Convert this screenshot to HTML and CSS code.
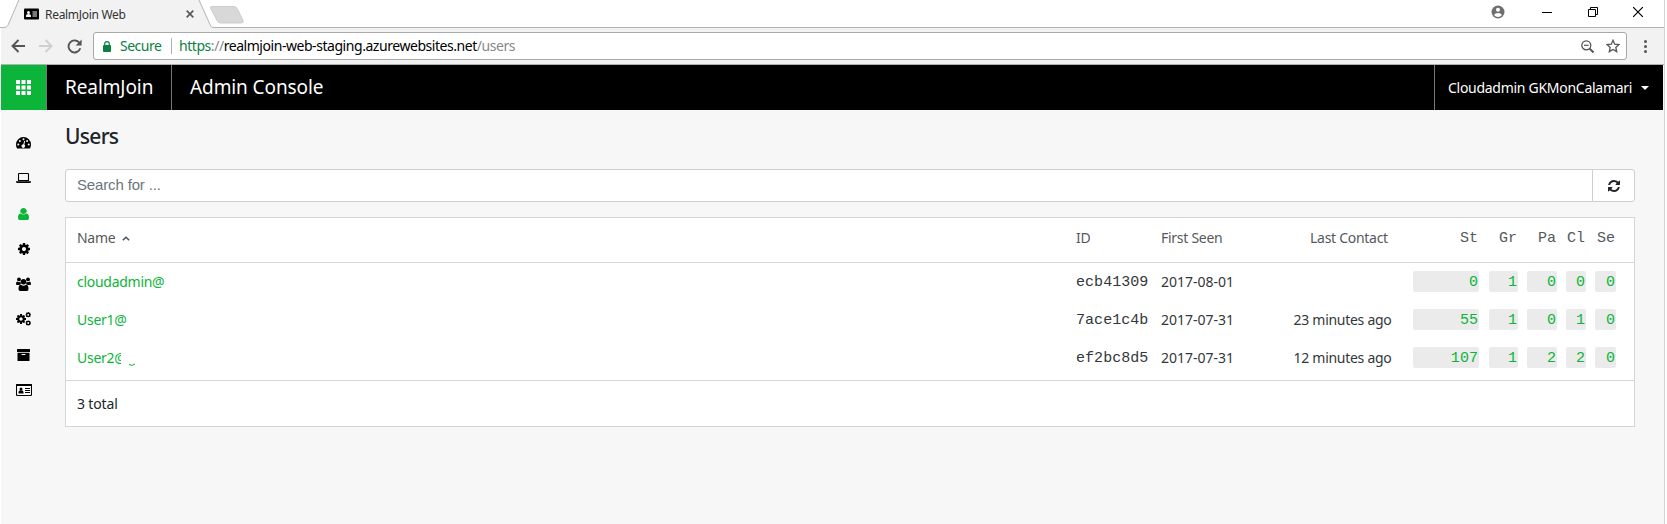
FILE: index.html
```html
<!DOCTYPE html>
<html lang="en">
<head>
<meta charset="utf-8">
<title>RealmJoin Web</title>
<link rel="stylesheet" href="styles.css">
</head>
<body>
<svg class="defs" width="0" height="0">
  <symbol id="cog" viewBox="128 128 1536 1536"><path d="M1152 896q0-106-75-181t-181-75-181 75-75 181 75 181 181 75 181-75 75-181zm512-109v222q0 12-8 23t-20 13l-185 28q-19 54-39 91 35 50 107 138 10 12 10 25t-9 23q-27 37-99 108t-94 71q-12 0-26-9l-138-108q-44 23-91 38-16 136-29 186-7 28-36 28h-222q-14 0-24.5-8.5t-11.5-21.5l-28-184q-49-16-90-37l-141 107q-10 9-25 9-14 0-25-11-126-114-165-168-7-10-7-23 0-12 8-23 15-21 51-66.5t54-70.5q-27-50-41-99l-183-27q-13-2-21-12.5t-8-23.5v-222q0-12 8-23t19-13l186-28q14-46 39-92-40-57-107-138-10-12-10-24 0-10 9-23 26-36 98.5-107.5t94.5-71.5q13 0 26 10l138 107q44-23 91-38 16-136 29-186 7-28 36-28h222q14 0 24.5 8.5t11.5 21.5l28 184q49 16 90 37l142-107q9-9 24-9 13 0 25 10 129 119 165 170 7 8 7 22 0 12-8 23-15 21-51 66.5t-54 70.5q26 50 41 98l183 28q13 2 21 12.5t8 23.5z"/></symbol>
</svg>
<div class="window">
  <header class="tabs">
    <svg class="tabshape" width="250" height="28" viewBox="0 0 250 28">
      <path d="M0 28V27.500H4C7 27.500 7.500 26 8.500 24L18.500 1L19 0H199L210 24.500C211 27 212 27.500 214 27.500H250V28Z" fill="#f2f2f2"/>
      <path d="M0 27.500H4C7 27.500 7.500 26 8.500 24L18.500 1L19-1M198.500-1L210 24.500C211 27 212 27.500 214 27.500H250" fill="none" stroke="#b4b4b4"/>
      <path d="M211.500 6.500H234Q236.500 6.500 237.500 9L243 20.500Q244 23 241.500 23H221Q218 23 217 20.500L210.500 8Q210 6.500 211.500 6.500Z" fill="#d8d8d8" stroke="#cdcdcd"/>
    </svg>
    <div class="tab">
      <svg width="15" height="12" viewBox="0 0 15 12"><rect width="15" height="11" y=".5" rx="1"/><g fill="#f2f2f2"><circle cx="4.500" cy="4.500" r="1.500"/><path d="M2 9V7.500Q2 6 4.500 6T7 7.500V9ZM8.500 3.500H13V4.500H8.500ZM8.500 5.500H13V6.500H8.500ZM8.500 7.500H13V8.500H8.500Z"/></g></svg>
      <span class="tabtitle">RealmJoin Web</span>
      <svg width="8" height="8" viewBox="0 0 8 8"><path d="M.7.7L7.300 7.300M7.300.7L.7 7.300" stroke="#5a5a5a" stroke-width="1.700"/></svg>
    </div>
    <div class="controls">
      <svg width="14" height="14" viewBox="0 0 14 14"><circle cx="7" cy="7" r="6.500" fill="#6e6e6e"/><g fill="#fff"><circle cx="7" cy="4.800" r="2"/><path d="M3 10Q4 8 7 8T11 10Q9.500 12 7 12T3 10Z"/></g></svg>
      <svg width="10" height="10" viewBox="0 0 10 10"><path d="M0 5.500H10" stroke="#000"/></svg>
      <svg width="10" height="10" viewBox="0 0 10 10" fill="none" stroke="#000"><path d="M.5 2.500H7.500V9.500H.5ZM2.500 2V.5H9.500V7.500H8"/></svg>
      <svg width="10" height="10" viewBox="0 0 10 10"><path d="M0 0L10 10M10 0L0 10" stroke="#000" stroke-width="1.200"/></svg>
    </div>
  </header>
  <div class="toolbar">
    <div class="nav">
      <svg width="14" height="14" viewBox="0 0 14 14"><path d="M14 7H1.500M7.500 1L1.500 7L7.500 13" fill="none" stroke="#555" stroke-width="1.900"/></svg>
      <svg width="14" height="14" viewBox="0 0 14 14"><path d="M0 7H12.500M6.500 1L12.500 7L6.500 13" fill="none" stroke="#cfcfcf" stroke-width="1.900"/></svg>
      <svg width="15" height="15" viewBox="0 0 15 15"><path d="M12.500 4A6 6 0 1 0 13.300 9.200" fill="none" stroke="#555" stroke-width="1.900"/><path d="M14.600.5V6.500H8.600Z" fill="#555"/></svg>
    </div>
    <div class="omnibox">
      <svg width="8" height="11" viewBox="0 0 8 11"><rect y="4" width="8" height="7" rx="1" fill="#0b8043"/><path d="M1.700 4.500V3A2.300 2.300 0 0 1 6.300 3V4.500" fill="none" stroke="#0b8043" stroke-width="1.200"/></svg>
      <span class="secure">Secure</span>
      <span class="url"><b class="scheme">https</b><b class="dim">://</b>realmjoin-web-staging.azurewebsites.net<b class="dim">/users</b></span>
      <svg class="lens" width="13" height="13" viewBox="0 0 13 13" fill="none" stroke="#555"><circle cx="5.300" cy="5.300" r="4.500" stroke-width="1.300"/><path d="M3 5.300H7.600" stroke-width="1.200"/><path d="M8.600 8.600L12.500 12.500" stroke-width="2"/></svg>
      <svg width="14" height="14" viewBox="0 0 14 14"><path d="M7 1.300L8.700 5.200L13 5.600L9.800 8.400L10.700 12.600L7 10.400L3.300 12.600L4.200 8.400L1 5.600L5.300 5.200Z" fill="none" stroke="#555" stroke-width="1.300"/></svg>
    </div>
    <svg class="dots" width="3" height="13" viewBox="0 0 3 13" fill="#555"><circle cx="1.500" cy="1.500" r="1.500"/><circle cx="1.500" cy="6.500" r="1.500"/><circle cx="1.500" cy="11.500" r="1.500"/></svg>
  </div>
  <div class="appbar">
    <div class="launcher"><svg width="15" height="15" viewBox="0 0 15 15" fill="#fff"><path d="M0 0H4V4H0ZM5.500 0H9.500V4H5.500ZM11 0H15V4H11ZM0 5.500H4V9.500H0ZM5.500 5.500H9.500V9.500H5.500ZM11 5.500H15V9.500H11ZM0 11H4V15H0ZM5.500 11H9.500V15H5.500ZM11 11H15V15H11Z"/></svg></div>
    <div class="brand">RealmJoin</div>
    <div class="section">Admin Console</div>
    <div class="account"><span>Cloudadmin GKMonCalamari</span><svg width="8" height="4" viewBox="0 0 8 4"><path d="M0 0H8L4 4Z" fill="#fff"/></svg></div>
  </div>
  <div class="page">
    <nav class="side">
      <a><svg width="15" height="12" viewBox="0 0 15 12"><path d="M7.500 0A7.500 7.500 0 0 1 15 7.500Q15 9.700 13.900 11.500H1.100Q0 9.700 0 7.500A7.500 7.500 0 0 1 7.500 0Z"/><g fill="#f7f7f7"><circle cx="2.300" cy="7.500" r="1"/><circle cx="3.900" cy="3.900" r="1"/><circle cx="7.500" cy="2.300" r="1"/><circle cx="11.100" cy="3.900" r="1"/><circle cx="12.700" cy="7.500" r="1"/><path d="M8.300 3.800L9.200 4.100L8.300 7.600A1.800 1.800 0 1 1 7.300 7.300Z"/></g></svg></a>
      <a><svg width="15" height="10" viewBox="0 0 15 10"><path d="M2.500 7.500V1.200Q2.500.5 3.200.5H11.800Q12.500.5 12.500 1.200V7.500Z" fill="none" stroke="#000" stroke-width="1.100"/><path d="M0 8.300H15V9Q15 10 13.500 10H1.500Q0 10 0 9Z"/></svg></a>
      <a class="on"><svg width="11" height="12" viewBox="256 128 1280 1536" preserveAspectRatio="none"><path d="M1536 1399q0 109-62.500 187t-150.500 78h-854q-88 0-150.500-78t-62.500-187q0-85 8.500-160.500t31.500-152 58.500-131 94-89 134.500-34.500q131 128 313 128t313-128q76 0 134.500 34.500t94 89 58.500 131 31.500 152 8.500 160.500zm-256-887q0 159-112.500 271.500t-271.500 112.500-271.500-112.500-112.500-271.500 112.500-271.500 271.500-112.500 271.500 112.500 112.500 271.500z"/></svg></a>
      <a><svg width="12" height="12"><use href="#cog"/></svg></a>
      <a><svg width="15" height="14" viewBox="0 0 15 14"><circle cx="3" cy="2.400" r="1.900"/><circle cx="12" cy="2.400" r="1.900"/><path d="M0 7.200Q0 4.500 1.200 4.500Q3 5.600 4.600 4.800Q4.400 6.500 5.200 7.200Q3.800 7.200 3.200 8H1Q0 8 0 7.200ZM15 7.200Q15 4.500 13.800 4.500Q12 5.600 10.400 4.800Q10.600 6.500 9.800 7.200Q11.200 7.200 11.800 8H14Q15 8 15 7.200Z"/><circle cx="7.500" cy="4.800" r="2.700"/><path d="M2.500 12Q2.500 7.800 4.900 7.800Q7.500 9.500 10.100 7.800Q12.500 7.800 12.500 12Q12.500 14 10.800 14H4.200Q2.500 14 2.500 12Z"/></svg></a>
      <a><svg width="15" height="14" viewBox="0 0 15 14"><use href="#cog" x="0" y="2" width="10" height="10"/><use href="#cog" x="9.400" y="0" width="5.600" height="5.600"/><use href="#cog" x="9.400" y="8.200" width="5.600" height="5.600"/></svg></a>
      <a><svg width="13" height="12" viewBox="0 0 13 12"><path d="M.5 0H12.500Q13 0 13 .5V3H0V.5Q0 0 .5 0ZM.5 3.800H12.500V11.500Q12.500 12 12 12H1Q.5 12 .5 11.500Z"/><path d="M5 5.500H8" stroke="#f7f7f7" stroke-width="1.100" stroke-linecap="round"/></svg></a>
      <a><svg width="16" height="12" viewBox="0 0 16 12"><rect x=".5" y=".5" width="15" height="11" rx="1" fill="#fff" stroke="#000" stroke-width="1.100"/><path d="M0 .5Q0 0 1 0H15Q16 0 16 1V2H0Z"/><circle cx="5" cy="5" r="1.500"/><path d="M2.500 9.500V8Q2.500 6.300 5 6.300T7.500 8V9.500ZM9 4H14V5H9ZM9 6H14V7H9ZM9 8H14V9H9Z"/></svg></a>
    </nav>
    <main class="content">
      <h1>Users</h1>
      <div class="search">
        <div class="field">Search for ...</div>
        <div class="reload"><svg width="12" height="12" viewBox="128 128 1536 1536" fill="#212529"><path d="M1639 1056q0 5-1 7-64 268-268 434.500t-478 166.500q-146 0-282.500-55t-243.500-157l-129 129q-19 19-45 19t-45-19-19-45v-448q0-26 19-45t45-19h448q26 0 45 19t19 45-19 45l-137 137q71 66 161 102t187 36q134 0 250-65t186-179q11-17 53-117 8-23 30-23h192q13 0 22.500 9.500t9.500 22.500zm25-800v448q0 26-19 45t-45 19h-448q-26 0-45-19t-19-45 19-45l138-138q-148-137-349-137-134 0-250 65t-186 179q-11 17-53 117-8 23-30 23h-199q-13 0-22.500-9.500t-9.500-22.500v-7q65-268 270-434.500t480-166.500q146 0 284 55.500t245 156.500l130-129q19-19 45-19t45 19 19 45z"/></svg></div>
      </div>
      <section class="table">
        <div class="row head">
          <span class="sortable">Name<svg width="8" height="5" viewBox="0 0 8 5"><path d="M.8 4.300L4 1.200L7.200 4.300" fill="none" stroke="#495057" stroke-width="1.500"/></svg></span>
          <span>ID</span><span>First Seen</span><span>Last Contact</span>
          <div class="counts"><span>St</span><span>Gr</span><span>Pa</span><span>Cl</span><span>Se</span></div>
        </div>
        <div class="body">
          <div class="row"><a class="name">cloudadmin@</a><span class="id">ecb41309</span><span class="date">2017-08-01</span><span class="ago"></span><div class="counts"><b>0</b><b>1</b><b>0</b><b>0</b><b>0</b></div></div>
          <div class="row"><a class="name">User1@</a><span class="id">7ace1c4b</span><span class="date">2017-07-31</span><span class="ago">23 minutes ago</span><div class="counts"><b>55</b><b>1</b><b>0</b><b>1</b><b>0</b></div></div>
          <div class="row"><a class="name"><span class="cut">User2@</span><svg class="stroke" width="8" height="4" viewBox="0 0 8 4"><path d="M1 1.500Q4 3.500 7 1" fill="none" stroke="#0cb53a"/></svg></a><span class="id">ef2bc8d5</span><span class="date">2017-07-31</span><span class="ago">12 minutes ago</span><div class="counts"><b>107</b><b>1</b><b>2</b><b>2</b><b>0</b></div></div>
        </div>
        <div class="total">3 total</div>
      </section>
    </main>
  </div>
</div>
</body>
</html>
```
FILE: styles.css
```css
* { box-sizing: border-box; }
body { margin: 0; background: #fff; font: 14px "Noto Sans", "Open Sans", sans-serif; color: #212529; overflow: hidden; white-space: nowrap; }
svg { display: block; flex: none; }
b { font-weight: inherit; }
.defs { position: absolute; }
.window { height: 524px; margin: 0 2px 0 1px; border-right: 1px solid #d5d5d5; background: #f7f7f7; display: flex; flex-direction: column; }

.tabs { position: relative; height: 28px; background: #fff; border-bottom: 1px solid #b4b4b4; display: flex; justify-content: space-between; }
.tabshape { position: absolute; left: -1px; top: 0; }
.tab { position: relative; display: flex; align-items: center; height: 28px; padding-left: 23px; }
.tabtitle { width: 147px; padding-left: 6px; font-size: 12px; letter-spacing: -.3px; color: #333; }
.controls { display: flex; align-items: center; height: 24px; gap: 35.500px; padding-right: 21px; }
.controls svg:first-child { margin-right: 2px; }

.toolbar { height: 37px; background: #f2f2f2; border-bottom: 1px solid #b0b0b0; display: flex; align-items: center; }
.nav { display: flex; align-items: center; gap: 14px; width: 92px; padding-left: 10px; }
.omnibox { width: 1534px; height: 28px; border: 1px solid #a9a9a9; border-radius: 3px; background: #fff; display: flex; align-items: center; padding: 0 6px 0 9px; }
.secure { width: 52px; margin-left: 9px; line-height: 16px; border-right: 1px solid #b0b0b0; color: #0b8043; letter-spacing: -.5px; }
.url { margin-left: 7px; padding-bottom: 1px; color: #000; letter-spacing: -.45px; }
.scheme { color: #0b8043; }
.dim { color: #888; }
.lens { margin-left: auto; margin-right: 12px; }
.dots { margin-left: 17px; }

.appbar { height: 45px; background: #000; color: #fff; display: flex; margin-right: 1px; }
.launcher { width: 46px; border-right: 1px solid #777; background: #0cb53a; display: flex; align-items: center; justify-content: center; }
.brand, .section { font-size: 19px; line-height: 45px; letter-spacing: -.1px; padding-left: 18px; }
.brand { width: 125px; border-right: 1px solid #777; }
.account { margin-left: auto; width: 229px; border-left: 1px solid #777; padding-left: 13px; display: flex; align-items: center; line-height: 46px; gap: 9px; letter-spacing: -.28px; }

.page { flex: 1; display: flex; }
.side { width: 64px; padding-top: 15.600px; }
.side a { display: flex; align-items: center; justify-content: center; width: 45px; height: 35.250px; color: #000; }
.side svg { fill: currentColor; }
.side .on { color: #0cb53a; }
.content { width: 1570px; padding-top: 11px; }
h1 { margin: 0 0 16px; font-size: 21px; font-weight: 500; line-height: 31px; height: 32px; letter-spacing: -.7px; }
.search { height: 33px; border: 1px solid #cfcfcf; border-radius: 3px; background: #fff; display: flex; }
.field { flex: 1; padding-left: 11px; line-height: 30px; color: #6c757d; font-family: "Liberation Sans", sans-serif; font-size: 15px; letter-spacing: -.15px; }
.reload { width: 42px; border-left: 1px solid #cfcfcf; display: flex; align-items: center; justify-content: center; }

.table { margin-top: 15px; height: 210px; border: 1px solid #d6d6d6; background: #fff; }
.row { display: grid; grid-template-columns: 999px 85px 149px 103px auto; height: 38px; align-items: center; padding-left: 11px; line-height: 36px; letter-spacing: -.28px; color: #33373b; }
.head { height: 45px; padding-bottom: 4px; border-bottom: 1px solid #d6d6d6; color: #55595c; }
.sortable { display: flex; align-items: center; gap: 7px; }
.body { height: 118px; border-bottom: 1px solid #d6d6d6; }
.name { color: #0cb53a; display: flex; }
.cut { width: 44px; overflow: hidden; }
.stroke { margin: 23px 0 0 6.500px; }
.counts { display: grid; grid-template-columns: 67px 29px 30px 20px 21px; column-gap: 9px; text-align: right; }
.counts > :first-child { margin-right: 1px; }
.counts, .id { font-family: "Liberation Mono", monospace; font-size: 15px; letter-spacing: .05px; }
.id { padding-top: 2px; }
.body .counts { margin-top: -1px; }
.counts span { padding-right: 1px; }
.head .counts { padding-top: 1px; }
.counts b { height: 21px; line-height: 23px; background: #ebebeb; border-radius: 2px; color: #0cb53a; padding-right: 1px; }
.date { letter-spacing: 0; }
.ago { margin-left: -20px; padding-right: 21.500px; text-align: right; }
.total { padding-left: 11px; line-height: 45px; letter-spacing: -.15px; }
```
